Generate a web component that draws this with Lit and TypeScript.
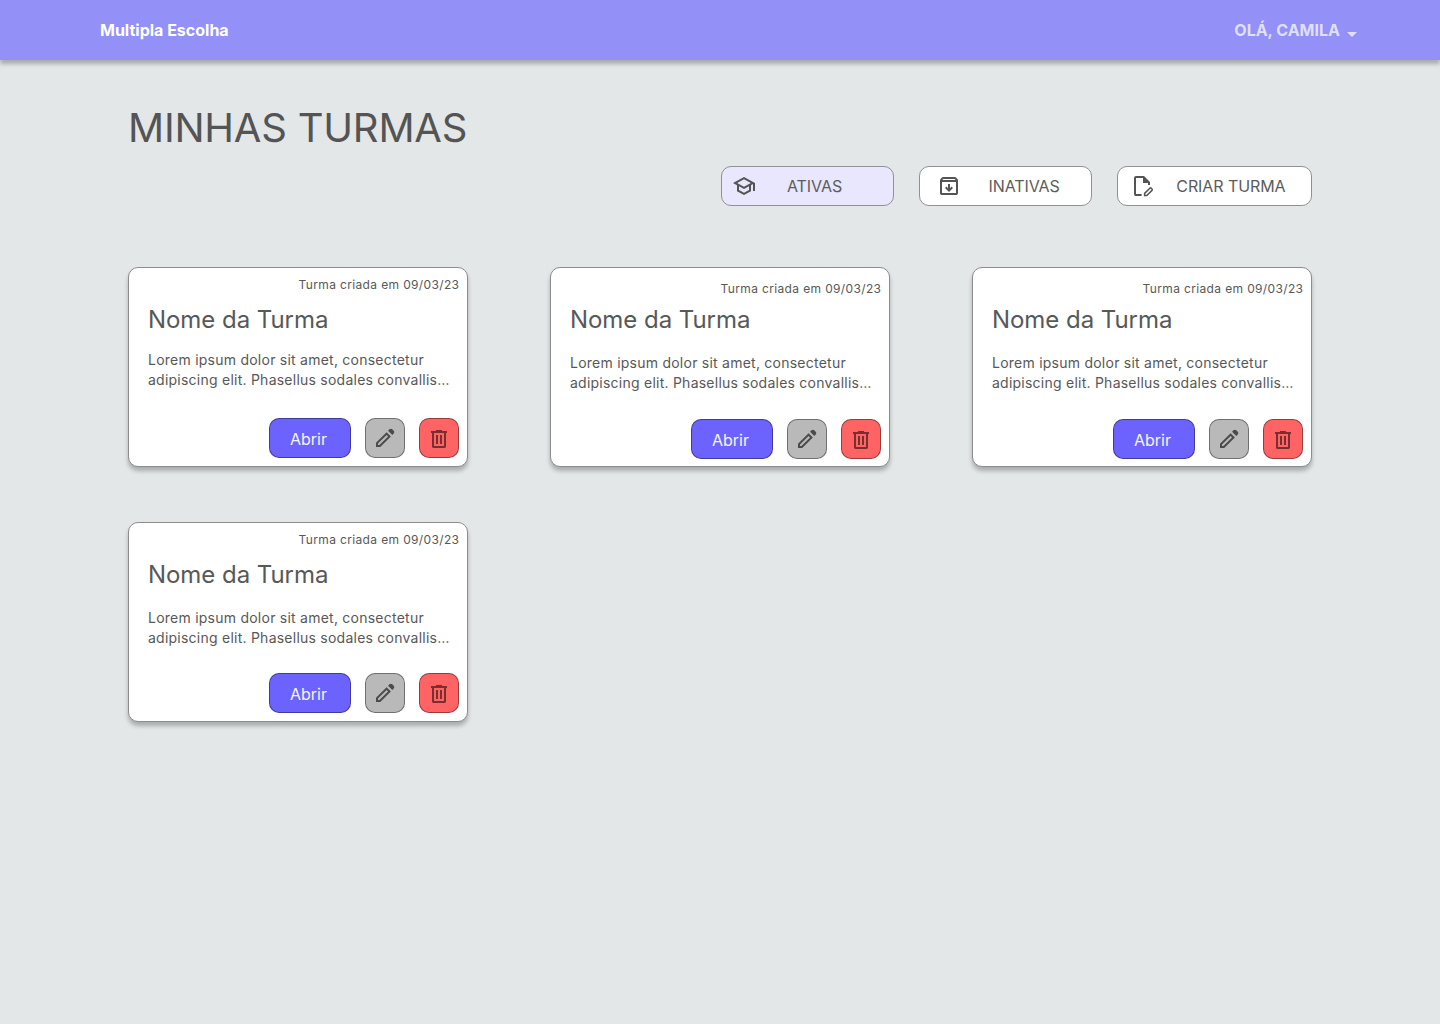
import { LitElement, html, css, svg } from "lit";
import { customElement, property } from "lit/decorators.js";

interface Turma {
  nome: string;
  data: string;
  linhas: string[];
  variante: string;
}

const linhas = ["Lorem ipsum dolor sit amet, consectetur", "adipiscing elit. Phasellus sodales convallis…"];

const turmas: Turma[] = ["compact", "low", "low", "mixed"].map((variante) => ({
  nome: "Nome da Turma",
  data: "09/03/23",
  linhas,
  variante,
}));

const icons = {
  school: svg`<path d="M12 21 5 17.2v-6L1 9l11-6 11 6v8h-2v-6.9l-2 1.1v6L12 21Zm0-8.3L18.85 9 12 5.3 5.15 9 12 12.7Zm0 6.025 5-2.7V12.25L12 15l-5-2.75v3.775l5 2.7Z"/>`,
  archive: svg`<path d="m12 18 4-4-1.4-1.4-1.6 1.6V10h-2v4.2l-1.6-1.6L8 14l4 4ZM5 8v11h14V8H5Zm0 13q-.825 0-1.412-.587Q3 19.825 3 19V6.525q0-.35.113-.675.112-.325.337-.6L4.7 3.725q.275-.35.688-.537Q5.8 3 6.25 3h11.5q.45 0 .863.188.412.187.687.537l1.25 1.525q.225.275.337.6.113.325.113.675V19q0 .825-.587 1.413Q19.825 21 19 21H5ZM5.4 6h13.2l-.85-1H6.25L5.4 6Z"/>`,
  document: svg`<path d="M6 22q-.825 0-1.412-.587Q4 20.825 4 20V4q0-.825.588-1.413Q5.175 2 6 2h8l6 6v3h-2V9h-5V4H6v16h5.6v2H6Z"/><path fill="none" stroke="currentColor" stroke-width="1.5" d="M14.6 21.5v-2.1l5.2-5.2q.75-.7 1.5 0l.7.7q.7.75 0 1.5l-5.2 5.1Z"/>`,
  edit: svg`<path d="M5 19h1.4l8.625-8.625-1.4-1.4L5 17.6V19ZM19.3 8.925l-4.25-4.2 1.4-1.4q.575-.575 1.413-.575.837 0 1.412.575l1.4 1.4q.575.575.6 1.388.025.812-.55 1.387L19.3 8.925ZM17.85 10.4 7.25 21H3v-4.25l10.6-10.6 4.25 4.25Z"/>`,
  trash: svg`<path d="M6.6 22q-.7 0-1.15-.45Q5 21.1 5 20.4V7H4V5h5V4h6v1h5v2h-1v13.4q0 .7-.45 1.15-.45.45-1.15.45H6.6ZM17 7H7v13h10V7ZM9 18h2V9H9v9Zm4 0h2V9h-2v9Z"/>`,
};

@customElement("app-icon")
export class AppIcon extends LitElement {
  @property() name: keyof typeof icons = "school";

  static styles = css`
    :host { display: block; width: 24px; height: 24px; flex: none; }
    .glyph { display: block; width: 100%; height: 100%; fill: currentColor; }
  `;

  render() {
    return html`<svg class="glyph" viewBox="0 0 24 24" aria-hidden="true">${icons[this.name]}</svg>`;
  }
}

@customElement("turma-card")
export class TurmaCard extends LitElement {
  @property({ attribute: false }) turma!: Turma;

  static styles = css`
    :host { display: block; }
    .card {
      box-sizing: border-box;
      width: 340px;
      height: 200px;
      padding: 9px 8px 0 19px;
      display: flex;
      flex-direction: column;
      background: #fff;
      border: 1px solid #8c8d8d;
      border-radius: 10px;
      box-shadow: 0 4px 4px rgba(0, 0, 0, 0.25);
      color: #585858;
      font-family: Inter, sans-serif;
    }
    .date { height: 16px; font-size: 12px; line-height: 16px; letter-spacing: 0.36px; text-align: right; margin-right: -0.4px; }
    .name { margin: 12px 0 0; height: 30px; font-size: 24px; line-height: 30px; font-weight: 400; letter-spacing: -0.05px; }
    .text { margin: 15px 0 0; font-size: 14px; line-height: 20px; letter-spacing: 0.24px; white-space: nowrap; height: 40px; }
    .line { display: block; }
    .actions { margin-top: 28px; display: flex; justify-content: flex-end; gap: 14px; }
    .low .date { margin-top: 4px; }
    .low .name { margin-top: 8px; }
    .low .text, .mixed .text { margin-top: 18px; }
    .low .actions { margin-top: 26px; }
    .mixed .actions { margin-top: 25px; }
    .btn {
      box-sizing: border-box;
      width: 40px;
      height: 40px;
      padding: 0;
      display: flex;
      align-items: center;
      justify-content: center;
      border: 1px solid rgba(0, 0, 0, 0.4);
      border-radius: 10px;
      font: 400 16px/20px Inter, sans-serif;
      color: #4b4b4b;
      background: #b9b9b9;
    }
    .open { width: 82px; padding: 2px 3px 0 0; color: #f6f5ff; background: #6c63ff; }
    .delete { background: #ff6363; color: #772f2f; }
  `;

  render() {
    const t = this.turma;
    return html`
      <article class="card ${t.variante}">
        <div class="date">Turma criada em ${t.data}</div>
        <h2 class="name">${t.nome}</h2>
        <p class="text">${t.linhas.map((l) => html`<span class="line">${l}</span>`)}</p>
        <div class="actions">
          <button class="btn open">Abrir</button>
          <button class="btn" aria-label="Editar"><app-icon name="edit"></app-icon></button>
          <button class="btn delete" aria-label="Excluir"><app-icon name="trash"></app-icon></button>
        </div>
      </article>
    `;
  }
}

@customElement("app-root")
export class AppRoot extends LitElement {
  static styles = css`
    :host { display: block; min-height: 1024px; background: #e3e7e8; font-family: Inter, sans-serif; color: #545454; }
    .bar {
      box-sizing: border-box;
      height: 60px;
      padding: 0 83px 0 100px;
      display: flex;
      align-items: center;
      justify-content: space-between;
      background: #9391f8;
      box-shadow: 0 4px 4px rgba(0, 0, 0, 0.25);
      font-size: 16px;
      line-height: 20px;
      font-weight: 700;
      color: #fff;
    }
    .user { display: flex; align-items: center; gap: 7px; color: #e0dffd; }
    .caret { width: 10px; height: 5px; margin-top: 9px; fill: currentColor; display: block; }
    .main { padding: 44px 128px 0; }
    .title { margin: 0; height: 48px; font-size: 40px; line-height: 48px; font-weight: 400; letter-spacing: -0.22px; }
    .filters { margin-top: 14px; display: flex; justify-content: flex-end; gap: 25px; }
    .filter {
      box-sizing: border-box;
      width: 173px;
      height: 40px;
      padding: 0 0 0 10px;
      display: flex;
      align-items: center;
      gap: 31px;
      border: 1px solid #8f9192;
      border-radius: 10px;
      background: #fff;
      color: #545454;
      font: 400 16px/20px Inter, sans-serif;
      letter-spacing: -0.08px;
      white-space: nowrap;
    }
    .label { color: #5c5c5c; }
    .active { background: #e8e7fd; }
    .archived { padding-left: 17px; gap: 27.5px; }
    .create { width: 195px; padding-left: 12px; gap: 22.3px; }
    .grid { margin-top: 61px; display: grid; grid-template-columns: repeat(3, 340px); justify-content: space-between; row-gap: 55px; }
  `;

  render() {
    return html`
      <header class="bar">
        <span>Multipla Escolha</span>
        <div class="user">
          <span>OLÁ, CAMILA</span>
          <svg class="caret" viewBox="0 0 10 5"><path d="M0 0h10L5 5Z" /></svg>
        </div>
      </header>
      <main class="main">
        <h1 class="title">MINHAS TURMAS</h1>
        <nav class="filters">
          <button class="filter active"><app-icon name="school"></app-icon><span class="label">ATIVAS</span></button>
          <button class="filter archived"><app-icon name="archive"></app-icon><span class="label">INATIVAS</span></button>
          <button class="filter create"><app-icon name="document"></app-icon><span class="label">CRIAR TURMA</span></button>
        </nav>
        <section class="grid">${turmas.map((t) => html`<turma-card .turma=${t}></turma-card>`)}</section>
      </main>
    `;
  }
}
